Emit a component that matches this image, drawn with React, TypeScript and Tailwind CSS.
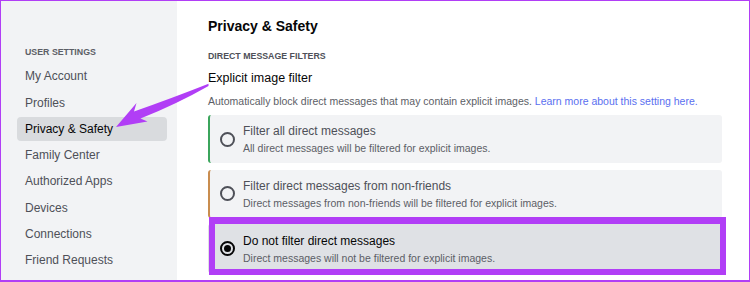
import React from 'react';

const navItems = [
  'My Account',
  'Profiles',
  'Privacy & Safety',
  'Family Center',
  'Authorized Apps',
  'Devices',
  'Connections',
  'Friend Requests',
];

const options = [
  {
    title: 'Filter all direct messages',
    desc: 'All direct messages will be filtered for explicit images.',
    accent: 'border-l-[#3ba55c]',
  },
  {
    title: 'Filter direct messages from non-friends',
    desc: 'Direct messages from non-friends will be filtered for explicit images.',
    accent: 'border-l-[#c98d4f]',
  },
  {
    title: 'Do not filter direct messages',
    desc: 'Direct messages will not be filtered for explicit images.',
    accent: 'border-l-transparent',
    selected: true,
  },
];

function Radio({ checked }: { checked?: boolean }) {
  return (
    <span
      className={`flex h-[15px] w-[15px] shrink-0 items-center justify-center rounded-full border-2 ${
        checked ? 'border-[#060607]' : 'border-[#4e5058]'
      }`}
    >
      {checked && <span className="h-[7px] w-[7px] rounded-full bg-[#060607]" />}
    </span>
  );
}

export default function App() {
  return (
    <div
      className="relative flex h-[282px] w-[750px] overflow-hidden border border-b-2 border-[#b13ef6] bg-white"
      style={{ fontFamily: '"Liberation Sans", Arial, sans-serif' }}
    >
      {/* Sidebar */}
      <aside className="flex w-[176px] shrink-0 flex-col bg-[#f2f3f5] pl-[16px] pr-[10px] pt-[45px]">
        <div className="h-[12px] pl-[8px] text-[8.8px] font-bold uppercase leading-[12px] text-[#5c5e66]">
          User Settings
        </div>
        <nav className="mt-[6px] flex flex-col gap-[1.8px]">
          {navItems.map(item => (
            <div
              key={item}
              className={`flex h-[24.5px] items-center rounded-[4px] px-[8px] text-[12px] ${
                item === 'Privacy & Safety' ? 'bg-[#d9dbde] text-[#060607]' : 'text-[#4e5058]'
              }`}
            >
              {item}
            </div>
          ))}
        </nav>
      </aside>

      {/* Content */}
      <main className="flex flex-1 flex-col pl-[31px] pr-[27px] pt-[16px]">
        <h1 className="text-[14px] font-bold leading-[18px] text-[#060607]">Privacy &amp; Safety</h1>
        <div className="mt-[15px] text-[8.8px] font-bold uppercase leading-[12px] text-[#4e5058]">
          Direct Message Filters
        </div>
        <div className="mt-[8px] text-[12.5px] leading-[16px] text-[#060607]">Explicit image filter</div>
        <p className="mt-[8px] whitespace-nowrap text-[10.5px] leading-[14px] text-[#5c5e66]">
          Automatically block direct messages that may contain explicit images.{' '}
          <span className="text-[#5a6ff0]">Learn more about this setting here.</span>
        </p>

        <div className="mt-[6.75px] flex flex-col gap-[6.25px]">
          {options.map(opt => (
            <div
              key={opt.title}
              className={`relative flex h-[48.5px] items-center gap-[8px] rounded-[3px] border-l-2 pl-[10px] ${opt.accent} ${
                opt.selected ? 'bg-[#dfe1e5]' : 'bg-[#f2f3f5]'
              }`}
            >
              <Radio checked={opt.selected} />
              <div className="flex flex-col gap-[3px]">
                <span
                  className={`text-[12px] leading-[16px] ${opt.selected ? 'text-[#060607]' : 'text-[#4e5058]'}`}
                >
                  {opt.title}
                </span>
                <span className="text-[10.5px] leading-[13px] text-[#5c5e66]">{opt.desc}</span>
              </div>
              {opt.selected && (
                <span className="pointer-events-none absolute -bottom-[2.25px] -left-[1px] -right-[4px] -top-[7.25px] border-[6px] border-t-[7px] border-[#b13ef6]" />
              )}
            </div>
          ))}
        </div>
      </main>

      {/* Annotation arrow */}
      <svg
        className="pointer-events-none absolute left-0 top-0"
        width="748"
        height="279"
        viewBox="1 1 748 279"
      >
        <path
          d="M116 127 L136.5 103 L134 111.5 Q170 99 208.5 83.8 L208.5 86 Q176 104.5 140.5 118.5 L147.5 121.5 Z"
          fill="#b13ef6"
        />
      </svg>
    </div>
  );
}
